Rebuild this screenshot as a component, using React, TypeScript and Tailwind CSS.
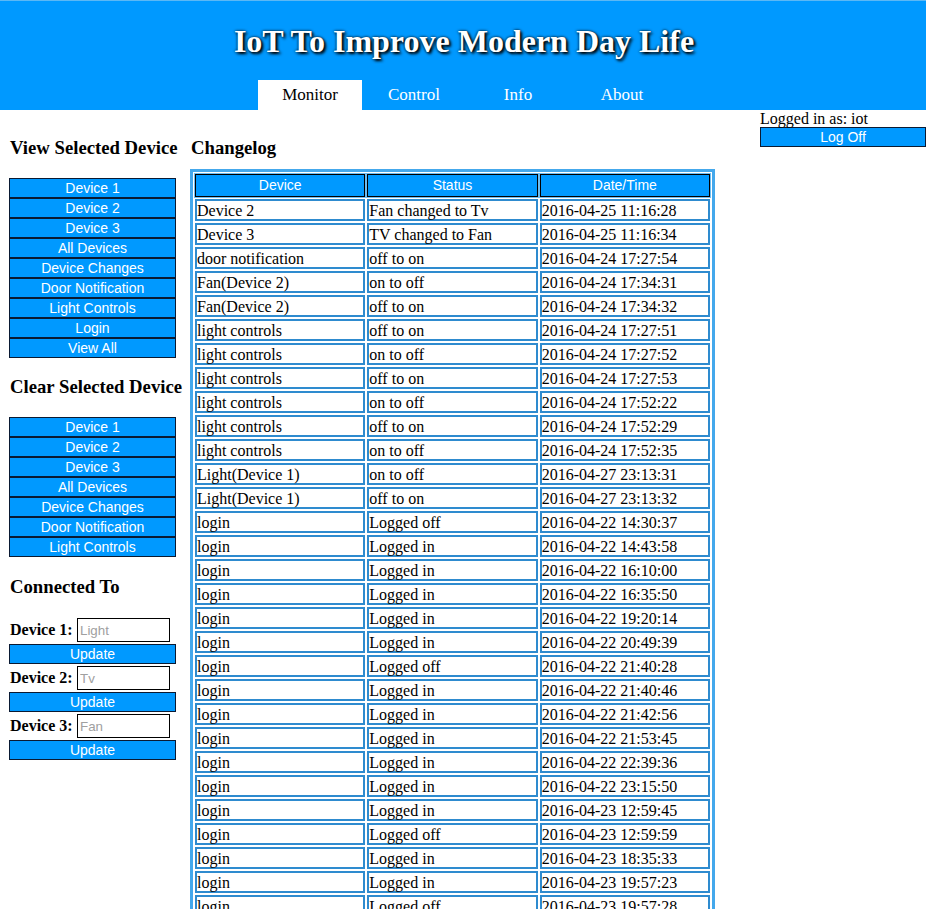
const rows: [string, string, string][] = [
  ["Device 2", "Fan changed to Tv", "2016-04-25 11:16:28"],
  ["Device 3", "TV changed to Fan", "2016-04-25 11:16:34"],
  ["door notification", "off to on", "2016-04-24 17:27:54"],
  ["Fan(Device 2)", "on to off", "2016-04-24 17:34:31"],
  ["Fan(Device 2)", "off to on", "2016-04-24 17:34:32"],
  ["light controls", "off to on", "2016-04-24 17:27:51"],
  ["light controls", "on to off", "2016-04-24 17:27:52"],
  ["light controls", "off to on", "2016-04-24 17:27:53"],
  ["light controls", "on to off", "2016-04-24 17:52:22"],
  ["light controls", "off to on", "2016-04-24 17:52:29"],
  ["light controls", "on to off", "2016-04-24 17:52:35"],
  ["Light(Device 1)", "on to off", "2016-04-27 23:13:31"],
  ["Light(Device 1)", "off to on", "2016-04-27 23:13:32"],
  ["login", "Logged off", "2016-04-22 14:30:37"],
  ["login", "Logged in", "2016-04-22 14:43:58"],
  ["login", "Logged in", "2016-04-22 16:10:00"],
  ["login", "Logged in", "2016-04-22 16:35:50"],
  ["login", "Logged in", "2016-04-22 19:20:14"],
  ["login", "Logged in", "2016-04-22 20:49:39"],
  ["login", "Logged off", "2016-04-22 21:40:28"],
  ["login", "Logged in", "2016-04-22 21:40:46"],
  ["login", "Logged in", "2016-04-22 21:42:56"],
  ["login", "Logged in", "2016-04-22 21:53:45"],
  ["login", "Logged in", "2016-04-22 22:39:36"],
  ["login", "Logged in", "2016-04-22 23:15:50"],
  ["login", "Logged in", "2016-04-23 12:59:45"],
  ["login", "Logged off", "2016-04-23 12:59:59"],
  ["login", "Logged in", "2016-04-23 18:35:33"],
  ["login", "Logged in", "2016-04-23 19:57:23"],
  ["login", "Logged off", "2016-04-23 19:57:28"],
  ["login", "Logged in", "2016-04-23 20:14:02"],
];

const viewButtons = [
  "Device 1",
  "Device 2",
  "Device 3",
  "All Devices",
  "Device Changes",
  "Door Notification",
  "Light Controls",
  "Login",
  "View All",
];

const clearButtons = viewButtons.slice(0, 7);

const tabs = ["Monitor", "Control", "Info", "About"];

const BlueButton = ({ label }: { label: string }) => {
  return (
    <button className="block w-[167px] h-[20px] bg-[#0099ff] border border-[#0a1a33] text-white text-[14px] leading-[17px] text-center font-['Liberation_Sans',Arial,sans-serif]">
      {label}
    </button>
  );
};

const Heading = ({ children, className }: { children: string; className: string }) => {
  return (
    <h3 className={"text-[18.72px] leading-[21px] font-bold text-black ml-[1px] " + className}>
      {children}
    </h3>
  );
};

const DeviceInput = ({ label, placeholder, first }: { label: string; placeholder: string; first?: boolean }) => {
  return (
    <div className={first ? "mt-[21px]" : "mt-[2px]"}>
      <div className="flex items-center h-[24px]">
        <span className="ml-[1px] w-[67px] text-[16px] leading-[20px] font-bold">{label}</span>
        <input
          placeholder={placeholder}
          className="w-[93px] h-[24px] border border-black px-[2px] text-[13.33px] font-['Liberation_Sans',Arial,sans-serif] placeholder:text-[#a0a0a0] outline-none"
        />
      </div>
      <div className="mt-[2px]">
        <BlueButton label="Update" />
      </div>
    </div>
  );
};

export default function App() {
  return (
    <div className="min-h-[909px] bg-white text-black font-['Liberation_Serif','Times_New_Roman',serif] overflow-hidden">
      {/* Header */}
      <div className="h-[110px] bg-[#0099ff] border-t border-[#5cb8f5] flex flex-col">
        <div className="h-[79px] flex items-center justify-center">
          <h1 className="text-[32px] font-bold text-white [text-shadow:2px_2px_3px_#000,0_0_3px_#000] ml-[2px]">
            IoT To Improve Modern Day Life
          </h1>
        </div>
        <div className="flex justify-center h-[30px] ml-[6px]">
          {tabs.map((t, i) => (
            <div
              key={t}
              className={
                "w-[104px] flex items-center justify-center text-[17px] " +
                (i === 0 ? "bg-white text-black" : "text-white")
              }
            >
              {t}
            </div>
          ))}
        </div>
      </div>

      {/* Body */}
      <div className="flex">
        {/* Sidebar */}
        <div className="w-[190px] shrink-0 pl-[9px]">
          <Heading className="mt-[27px]">View Selected Device</Heading>
          <div className="mt-[20px]">
            {viewButtons.map((b) => (
              <BlueButton key={b} label={b} />
            ))}
          </div>

          <Heading className="mt-[18px]">Clear Selected Device</Heading>
          <div className="mt-[20px]">
            {clearButtons.map((b) => (
              <BlueButton key={b} label={b} />
            ))}
          </div>

          <Heading className="mt-[19px]">Connected To</Heading>
          <DeviceInput label="Device 1:" placeholder="Light" first />
          <DeviceInput label="Device 2:" placeholder="Tv" />
          <DeviceInput label="Device 3:" placeholder="Fan" />
        </div>

        {/* Changelog */}
        <div className="w-[525px] shrink-0">
          <h3 className="text-[18.72px] leading-[21px] font-bold mt-[27px] ml-[1px]">Changelog</h3>
          <table className="mt-[11px] w-[525px] table-fixed border-separate border-spacing-[2px] border-[3px] border-[#44a8ec]">
            <thead>
              <tr>
                {["Device", "Status", "Date/Time"].map((h) => (
                  <th
                    key={h}
                    className="bg-[#0099ff] border border-black shadow-[0_0_0_1px_#6dbdf0] text-white font-normal text-[14px] leading-[18px] pt-[1px] pb-[2px] font-['Liberation_Sans',Arial,sans-serif]"
                  >
                    {h}
                  </th>
                ))}
              </tr>
            </thead>
            <tbody>
              {rows.map((r, i) => (
                <tr key={i}>
                  {r.map((c, j) => (
                    <td
                      key={j}
                      className="h-[22px] border-2 border-[#2e8bcf] text-[16px] leading-[16px] pt-[2px] pb-0 px-0 whitespace-nowrap text-left"
                    >
                      {c}
                    </td>
                  ))}
                </tr>
              ))}
            </tbody>
          </table>
        </div>

        {/* Login status */}
        <div className="ml-[45px] w-[166px] shrink-0">
          <div className="text-[16px] leading-[17px]">Logged in as: iot</div>
          <button className="block w-[166px] h-[20px] bg-[#0099ff] border border-[#0a1a33] text-white text-[14px] leading-[17px] text-center font-['Liberation_Sans',Arial,sans-serif]">
            Log Off
          </button>
        </div>
      </div>
    </div>
  );
}
